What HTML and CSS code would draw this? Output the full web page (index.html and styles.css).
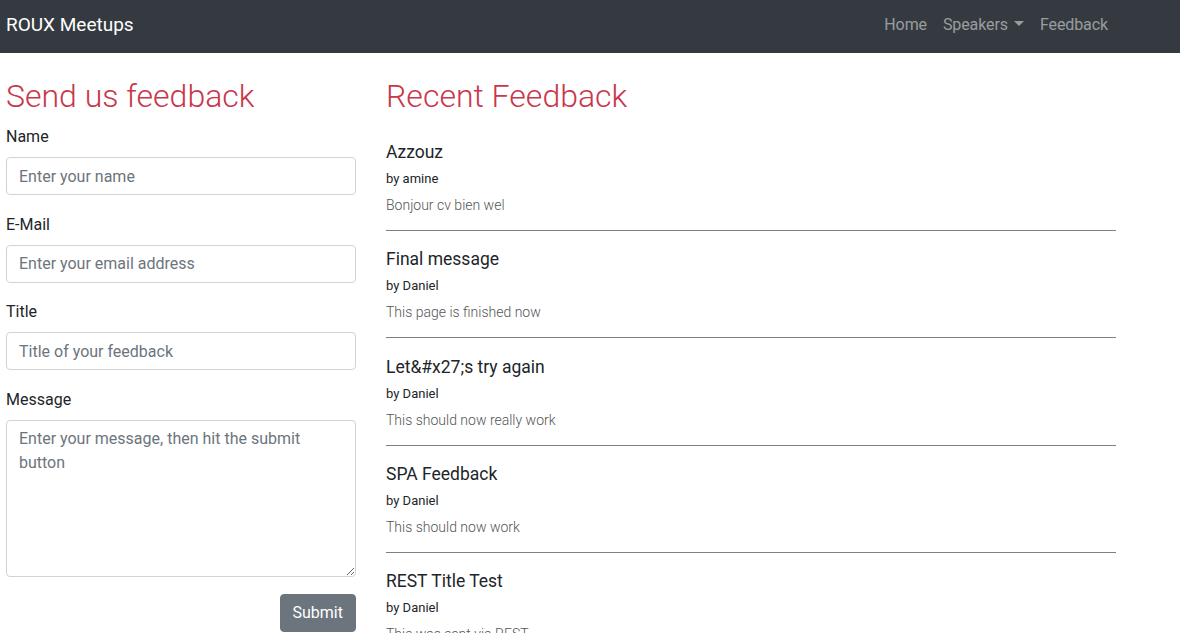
FILE: index.html
```html
<!DOCTYPE html>
<html lang="en">
<head>
<meta charset="utf-8">
<title>ROUX Meetups - Feedback</title>
<link rel="stylesheet" href="styles.css">
</head>
<body>
<nav class="navbar">
  <a class="brand" href="#">ROUX Meetups</a>
  <ul class="nav">
    <li><a class="nav-link" href="#">Home</a></li>
    <li><a class="nav-link dropdown" href="#">Speakers<span class="caret"></span></a></li>
    <li><a class="nav-link" href="#">Feedback</a></li>
  </ul>
</nav>
<main class="main">
  <section class="col-form">
    <h1 class="heading">Send us feedback</h1>
    <form class="form">
      <div class="form-group">
        <label class="label" for="name">Name</label>
        <input class="control" id="name" type="text" placeholder="Enter your name">
      </div>
      <div class="form-group">
        <label class="label" for="email">E-Mail</label>
        <input class="control" id="email" type="email" placeholder="Enter your email address">
      </div>
      <div class="form-group">
        <label class="label" for="title">Title</label>
        <input class="control" id="title" type="text" placeholder="Title of your feedback">
      </div>
      <div class="form-group">
        <label class="label" for="message">Message</label>
        <textarea class="control textarea" id="message" placeholder="Enter your message, then hit the submit button"></textarea>
      </div>
      <div class="actions">
        <button class="btn" type="submit">Submit</button>
      </div>
    </form>
  </section>
  <section class="col-list">
    <h1 class="heading">Recent Feedback</h1>
    <div class="feedback-list">
      <article class="item">
        <div class="item-title">Azzouz</div>
        <div class="item-by">by amine</div>
        <div class="item-msg">Bonjour cv bien wel</div>
        <hr class="rule">
      </article>
      <article class="item">
        <div class="item-title">Final message</div>
        <div class="item-by">by Daniel</div>
        <div class="item-msg">This page is finished now</div>
        <hr class="rule">
      </article>
      <article class="item">
        <div class="item-title">Let&amp;#x27;s try again</div>
        <div class="item-by">by Daniel</div>
        <div class="item-msg">This should now really work</div>
        <hr class="rule">
      </article>
      <article class="item">
        <div class="item-title">SPA Feedback</div>
        <div class="item-by">by Daniel</div>
        <div class="item-msg">This should now work</div>
        <hr class="rule">
      </article>
      <article class="item">
        <div class="item-title">REST Title Test</div>
        <div class="item-by">by Daniel</div>
        <div class="item-msg">This was sent via REST</div>
        <hr class="rule">
      </article>
    </div>
  </section>
</main>
</body>
</html>
```

FILE: styles.css
```css
* { box-sizing: border-box; }
html, body { margin: 0; padding: 0; }
body {
  font-family: Roboto, "Liberation Sans", Arial, sans-serif;
  font-size: 16px;
  line-height: 1.5;
  color: #212529;
  background: #fff;
  overflow: hidden;
}

.navbar {
  height: 53px;
  background: #343a40;
  display: flex;
  align-items: center;
  justify-content: space-between;
  padding: 0 64px 0 6px;
}
.brand {
  color: #fff;
  text-decoration: none;
  font-size: 19px;
  line-height: 30px;
  margin-top: -4px;
}
.nav {
  display: flex;
  list-style: none;
  margin: -4px 0 0 0;
  padding: 0;
}
.nav-link {
  display: block;
  padding: 0 8px;
  color: rgba(255,255,255,.5);
  text-decoration: none;
  font-size: 16px;
  line-height: 24px;
  letter-spacing: -0.1px;
}
.caret {
  display: inline-block;
  margin-left: 6px;
  vertical-align: 4px;
  border-top: 5px solid;
  border-left: 5px solid transparent;
  border-right: 5px solid transparent;
}

.main {
  display: flex;
  gap: 30px;
  padding: 24px 6px 0 6px;
}
.col-form { width: 350px; flex: none; }
.col-list { width: 730px; flex: none; }

.heading {
  font-size: 32px;
  font-weight: 300;
  line-height: 38px;
  margin: 0 0 9px 0;
  color: #c8374b;
}

.form-group { margin-bottom: 16.67px; }
.label {
  display: block;
  line-height: 24px;
  padding-top: 1px;
  margin-bottom: 8px;
}
.control {
  display: block;
  width: 100%;
  height: 38px;
  padding: 6px 12px;
  font-family: inherit;
  font-size: 16px;
  line-height: 24px;
  color: #495057;
  background: #fff;
  border: 1px solid #ced4da;
  border-radius: 4px;
}
.control::placeholder { color: #6c757d; opacity: 1; }
.textarea { height: 157.5px; resize: vertical; }

.actions { display: flex; justify-content: flex-end; }
.btn {
  font-family: inherit;
  font-size: 16px;
  line-height: 24px;
  padding: 6px 12px;
  color: #fff;
  background: #6c757d;
  border: 1px solid #6c757d;
  border-radius: 4px;
}

.feedback-list { padding-top: 14px; }
.item { display: flex; flex-direction: column; }
.item-title {
  font-size: 17.5px;
  line-height: 26px;
  margin-top: 1px;
  color: #212529;
}
.item-by {
  font-size: 13px;
  line-height: 20px;
  margin-top: 4px;
  color: #212529;
}
.item-msg {
  font-size: 14px;
  font-weight: 300;
  line-height: 20px;
  margin-top: 6px;
  color: #555;
}
.rule {
  margin: 15px 0 14.33px 0;
  border: 0;
  border-top: 1px solid #808080;
  height: 0;
}
```
